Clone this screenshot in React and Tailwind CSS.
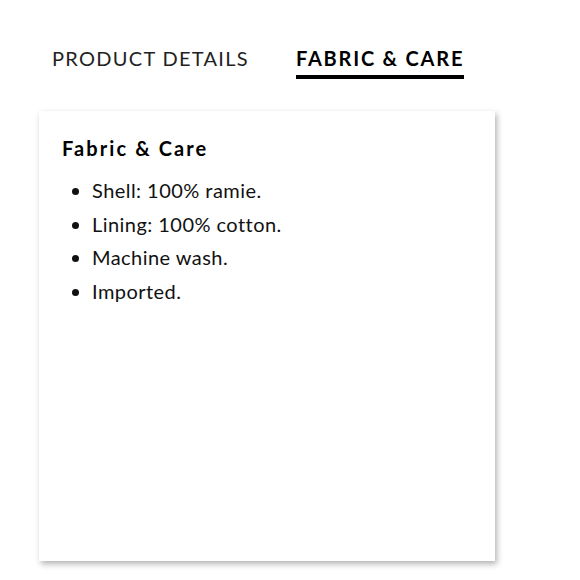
import React, { useState } from 'react';

const tabs = ['PRODUCT DETAILS', 'FABRIC & CARE'];

const items = ['Shell: 100% ramie.', 'Lining: 100% cotton.', 'Machine wash.', 'Imported.'];

const App = () => {
  const [active, setActive] = useState(1);

  return (
    <div className="w-[580px] h-[580px] bg-white font-['Lato',sans-serif] text-black overflow-hidden">
      <div className="flex gap-[47px] pl-[52px] pt-[44px]">
        {tabs.map((t, i) => (
          <button
            key={t}
            onClick={() => setActive(i)}
            className={`text-[20px] leading-[28px] pb-[3px] border-b-4 ${
              active === i
                ? 'font-bold tracking-[1.8px] border-black'
                : 'font-normal tracking-[1.3px] border-transparent text-[#222]'
            }`}
          >
            {t}
          </button>
        ))}
      </div>

      <div className="ml-[39px] mt-[32px] w-[456px] h-[450px] bg-white shadow-[2px_3px_6px_rgba(0,0,0,0.3)] pl-[23px] pt-[23px]">
        <h2 className="text-[20px] font-bold tracking-[2.1px] leading-[28px]">Fabric &amp; Care</h2>
        <ul className="mt-[12px] pl-[30px] list-disc text-[20px] tracking-[0.45px] leading-[33.6px] text-[#111]">
          {items.map((it) => (
            <li key={it}>{it}</li>
          ))}
        </ul>
      </div>
    </div>
  );
};

export default App;
